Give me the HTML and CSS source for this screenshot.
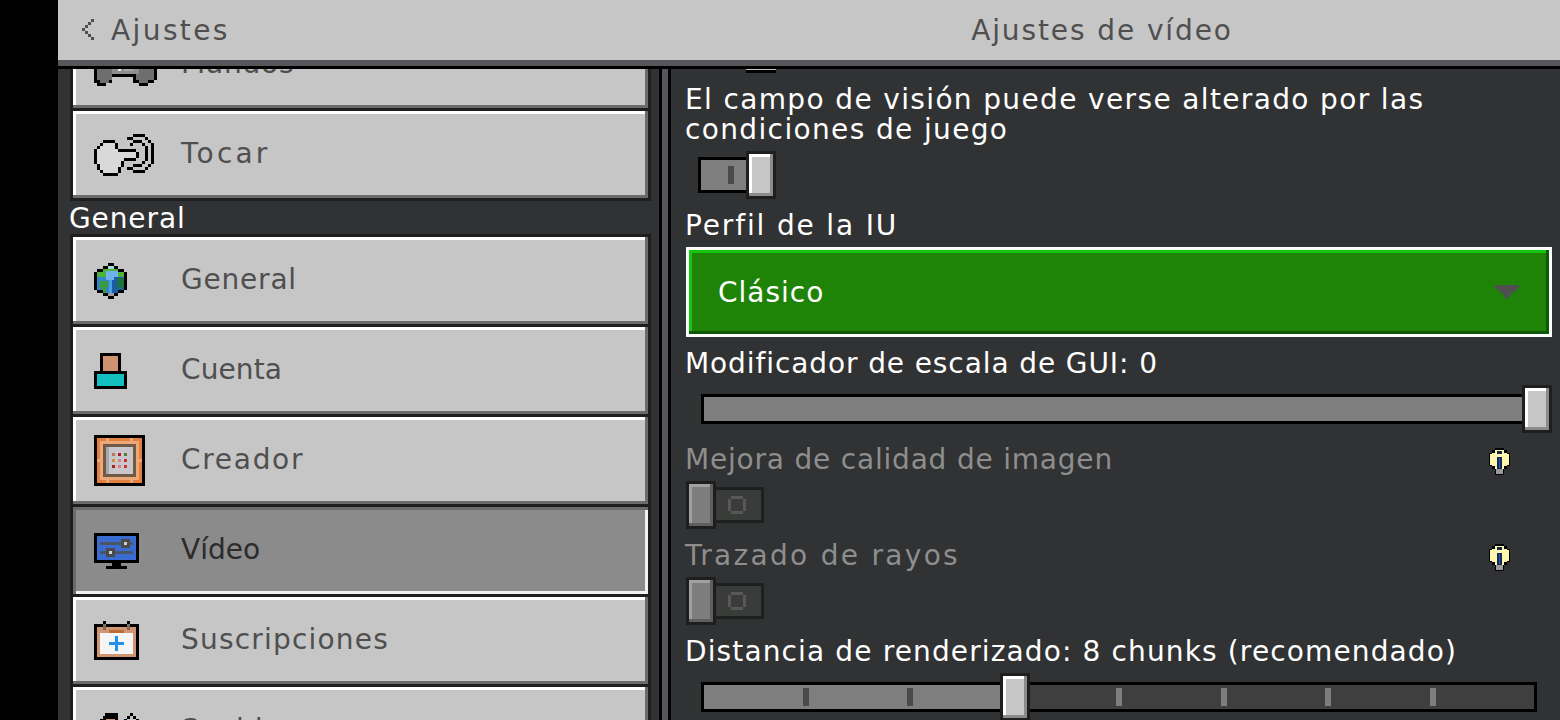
FILE: index.html
```html
<!DOCTYPE html>
<html lang="es">
<head>
  <meta charset="UTF-8" />
  <title>Ajustes de vídeo</title>
  <link rel="stylesheet" href="styles.css">
</head>
<body>
  <header class="topbar">
    <div class="back">
      <svg class="chevron" viewBox="0 0 4 7" width="12" height="21" shape-rendering="crispEdges"><path fill="#4f4f4f" d="M3 0h1v1H3zM2 1h1v1H2zM1 2h1v1H1zM0 3h1v1H0zM1 4h1v1H1zM2 5h1v1H2zM3 6h1v1H3z"/></svg>
      <span>Ajustes</span>
    </div>
    <div class="title">Ajustes de vídeo</div>
  </header>

  <div class="main">
    <aside class="sidebar">
      <div class="card first">
        <svg class="icon" viewBox="0 0 21 14" width="63" height="42" shape-rendering="crispEdges">
          <path fill="#000" d="M1 0h19v1h1v11h-1v1h-2v1h-3v-1h-2v-2H6v2H4v1H1v-1H0V1h1z"/>
          <path fill="#6e6e6e" d="M1 1h19v11h-2v1h-3v-1h-1V9H6v3H5v1H2v-1H1z"/>
          <path fill="#8e8e8e" d="M6 1h9v9H6z"/>
          <path fill="#f0f0f0" d="M8 8h1v1H8z"/>
          <path fill="#a8a8a8" d="M10 8h3v1h-3z"/>
        </svg>
        <span class="card-label ls-mandos">Mandos</span>
      </div>
      <div class="card">
        <svg class="icon" viewBox="0 0 20 14" width="60" height="42" shape-rendering="crispEdges">
          <path fill="#d9d9d9" d="M3 3h4v2h1v1h6v2h-3v1h-1v1H9v1H8v2H3v-1H2v-2H1V5h1V4h1z"/>
          <path fill="#000" d="M3 2h4v1H3zM2 3h1v1H2zM1 4h1v1H1zM0 5h1v5H0zM1 10h1v2H1zM2 12h1v1H2zM3 13h5v1H3zM8 11h1v2H8zM9 9h1v2H9zM7 3h1v2H7zM8 5h6v1H8zM14 6h1v2h-1zM10 8h4v1h-4z"/>
          <path fill="#000" d="M13 0h4v1h-4zM11 1h2v1h-2zM17 1h1v1h-1zM18 2h1v1h-1zM19 3h1v7h-1zM18 10h1v1h-1zM17 11h1v1h-1zM13 12h4v1h-4zM11 11h2v1h-2zM13 2h3v1h-3zM16 3h1v1h-1zM17 4h1v5h-1zM16 9h1v1h-1zM13 10h3v1h-3zM12 3h1v1h-1z"/>
        </svg>
        <span class="card-label ls-tocar">Tocar</span>
      </div>

      <div class="section">General</div>

      <div class="card">
        <svg class="icon" viewBox="0 0 22 24" width="33" height="36" shape-rendering="crispEdges">
          <path fill="#000" d="M9 0h4v2h3v2h4v2h2v12h-2v2h-4v2h-3v2H9v-2H6v-2H2v-2H0V6h2V4h4V2h3z"/>
          <path fill="#2f86c8" d="M2 6h9v16H9v-2H6v-2H2z"/>
          <path fill="#1d5aa8" d="M11 6h9v12h-4v2h-3v2h-2z"/>
          <path fill="#4cb33a" d="M6 4h3V2h4v2h3v2h4v3h-4V5H8v4H2V6h4z"/>
          <path fill="#6fb2ea" d="M8 5h8v4h-3v2H8z"/>
          <path fill="#4f9fe0" d="M10 11h2v9h-2z"/>
          <path fill="#3a9a3c" d="M4 12h5v4H8v4H6v-3H4z"/>
          <path fill="#1c7440" d="M15 10h5v6h-2v1h-3z"/>
          <path fill="#a8d8d8" d="M9 2h4v2H9z"/>
          <path fill="#9b9b9b" d="M9 20h4v2H9z"/>
        </svg>
        <span class="card-label">General</span>
      </div>
      <div class="card">
        <svg class="icon" viewBox="0 0 33 36" width="33" height="36" shape-rendering="crispEdges">
          <path fill="#000" d="M6 0h21v18h6v18H0V18h6z"/>
          <path fill="#cf9270" d="M9 3h15v15H9z"/>
          <path fill="#14bfbf" d="M3 21h27v12H3z"/>
        </svg>
        <span class="card-label ls-cuenta">Cuenta</span>
      </div>
      <div class="card">
        <svg class="icon" viewBox="0 0 51 51" width="51" height="51" shape-rendering="crispEdges">
          <path fill="#000" d="M0 0h51v51H0z"/>
          <path fill="#e2813f" d="M3 3h45v45H3z"/>
          <path fill="#eea878" d="M6 6h39v3H6zM6 42h39v3H6zM6 9h3v33H6zM42 9h3v33h-3zM12 3h3v3h-3zM36 3h3v3h-3zM12 45h3v3h-3zM36 45h3v3h-3zM3 24h3v3H3zM45 24h3v3h-3z"/>
          <path fill="#6f5a48" d="M9 9h33v33H9z"/>
          <path fill="#c9c7cc" d="M12 12h27v27H12z"/>
          <path fill="#a9a7ae" d="M12 12h3v27h-3z"/>
          <path fill="#c07060" d="M18 18h3v3h-3z"/>
          <path fill="#b02020" d="M24 18h3v3h-3zM18 30h3v3h-3z"/>
          <path fill="#5a7a30" d="M30 18h3v3h-3z"/>
          <path fill="#d09030" d="M18 24h3v3h-3z"/>
          <path fill="#d88080" d="M24 24h3v3h-3zM24 30h3v3h-3z"/>
          <path fill="#c83030" d="M30 24h3v3h-3zM30 30h3v3h-3z"/>
        </svg>
        <span class="card-label ls-creador">Creador</span>
      </div>
      <div class="card active">
        <svg class="icon" viewBox="0 0 45 36" width="45" height="36" shape-rendering="crispEdges">
          <path fill="#000" d="M0 0h45v30H27v3h6v3H12v-3h6v-3H0z"/>
          <path fill="#3a6bd0" d="M3 3h39v24H3z"/>
          <path fill="#4a5565" d="M6 9h33v3H6zM6 18h33v3H6z"/>
          <path fill="#4a4a4a" d="M27 6h9v9h-9zM12 15h9v9h-9z"/>
          <path fill="#d0d0d0" d="M30 9h3v3h-3zM15 18h3v3h-3z"/>
        </svg>
        <span class="card-label ls-video">Vídeo</span>
      </div>
      <div class="card">
        <svg class="icon" viewBox="0 0 45 39" width="45" height="39" shape-rendering="crispEdges">
          <path fill="#000" d="M0 3h45v36H0zM9 0h3v3H9zM33 0h3v3h-3z"/>
          <path fill="#d19570" d="M3 6h39v30H3z"/>
          <path fill="#7a6a5c" d="M9 3h3v6H9zM33 3h3v6h-3z"/>
          <path fill="#b86d35" d="M15 9h15v3H15z"/>
          <path fill="#f5f5f5" d="M6 12h33v21H6z"/>
          <path fill="#2291ec" d="M15 21h15v3H15zM21 15h3v15h-3z"/>
        </svg>
        <span class="card-label ls-subs">Suscripciones</span>
      </div>
      <div class="card">
        <svg class="icon" viewBox="0 0 45 36" width="45" height="36" shape-rendering="crispEdges">
          <path fill="#000" d="M11 0h13v36H6V6h3V3h2zM36 0h3v3h3v3h3v30H30V6h3V3h3z"/>
          <path fill="#cf9270" d="M12 6h9v30h-9z"/>
          <path fill="#c6c6c6" d="M36 3h3v3h3v30h-9V6h3z"/>
        </svg>
        <span class="card-label">Sonido</span>
      </div>
    </aside>

    <div class="scrollbar"></div>

    <section class="panel">
      <div class="thumb-tail"></div>

      <div class="setting">
        <p class="label ls-fov">El campo de visión puede verse alterado por las<br>condiciones de juego</p>
        <div class="toggle on">
          <div class="track"><i class="pip"></i></div>
          <div class="thumb"></div>
        </div>
      </div>

      <div class="setting">
        <p class="label ls-perfil">Perfil de la IU</p>
        <div class="dropdown">
          <span>Clásico</span>
          <svg viewBox="0 0 24 14" width="24" height="14" shape-rendering="crispEdges"><path fill="#4f4f52" d="M0 0h24v3h-2v3h-4v3h-3v3h-2v2h-2v-2H9V9H6V6H2V3H0z"/></svg>
        </div>
      </div>

      <div class="setting">
        <p class="label ls-mod">Modificador de escala de GUI: 0</p>
        <div class="slider">
          <div class="bar full"></div>
          <div class="thumb knob end"></div>
        </div>
      </div>

      <div class="setting">
        <div class="label-row">
          <p class="label off ls-mejora">Mejora de calidad de imagen</p>
          <svg class="bulb" viewBox="0 0 21 27" width="21" height="27" shape-rendering="crispEdges">
            <path fill="#000" d="M6 0h9v2h3v3h3v13h-3v3h-3v6H6v-6H3v-3H0V5h3V2h3z"/>
            <path fill="#fdf7b0" d="M6 2h9v3h3v1h2v11h-2v1h-3v3H6v-3H3v-1H1V6h2V5h3z"/>
            <path fill="#16284e" d="M8 3h5v3H8zM8 9h5v12H8z"/>
            <path fill="#2a5ac0" d="M10 10h1v10h-1z"/>
            <path fill="#9a9a9a" d="M7 21h7v5H7z"/>
          </svg>
        </div>
        <div class="toggle disabled">
          <div class="thumb"></div>
          <div class="track"><i class="ring"></i></div>
        </div>
      </div>

      <div class="setting">
        <div class="label-row">
          <p class="label off ls-trazado">Trazado de rayos</p>
          <svg class="bulb" viewBox="0 0 21 27" width="21" height="27" shape-rendering="crispEdges">
            <path fill="#000" d="M6 0h9v2h3v3h3v13h-3v3h-3v6H6v-6H3v-3H0V5h3V2h3z"/>
            <path fill="#fdf7b0" d="M6 2h9v3h3v1h2v11h-2v1h-3v3H6v-3H3v-1H1V6h2V5h3z"/>
            <path fill="#16284e" d="M8 3h5v3H8zM8 9h5v12H8z"/>
            <path fill="#2a5ac0" d="M10 10h1v10h-1z"/>
            <path fill="#9a9a9a" d="M7 21h7v5H7z"/>
          </svg>
        </div>
        <div class="toggle disabled">
          <div class="thumb"></div>
          <div class="track"><i class="ring"></i></div>
        </div>
      </div>

      <div class="setting">
        <p class="label ls-dist">Distancia de renderizado: 8 chunks (recomendado)</p>
        <div class="slider">
          <div class="bar partial">
            <i class="tick"></i><i class="tick"></i><i class="tick"></i>
            <i class="tick after"></i><i class="tick after"></i><i class="tick after"></i><i class="tick after"></i>
          </div>
          <div class="thumb knob" style="left: 37.5%"></div>
        </div>
      </div>
    </section>
  </div>
</body>
</html>
```

FILE: styles.css
```css
* {
  box-sizing: border-box;
}

html, body {
  height: 100%;
}

body {
  margin: 0;
  height: 720px;
  overflow: hidden;
  padding-left: 58px;
  display: flex;
  flex-direction: column;
  background-color: #000;
  font-family: 'DejaVu Sans', sans-serif;
  font-size: 28px;
  color: #fff;
}

.topbar {
  flex: none;
  height: 69px;
  display: flex;
  align-items: center;
  padding-bottom: 5px;
  background-color: #c6c6c6;
  border-bottom: 3px solid #000;
  box-shadow: inset 0 -6px 0 #58565a;
  color: #4f4f4f;
  position: relative;
  z-index: 2;
}

.back {
  width: 586px;
  display: flex;
  align-items: center;
  gap: 17px;
  padding-left: 24px;
  letter-spacing: 2.4px;
}

.chevron {
  margin-bottom: 2px;
}

.title {
  flex: 1;
  text-align: center;
  letter-spacing: 1.9px;
}

.main {
  flex: 1;
  min-height: 0;
  display: flex;
  overflow: hidden;
  background-color: #313233;
}

/* left column */
.sidebar {
  width: 601px;
  flex: none;
  padding: 0 8px 0 12px;
}

.card {
  height: 93px;
  margin-bottom: -3px;
  display: flex;
  align-items: center;
  padding-left: 21px;
  background-color: #c6c6c6;
  border: 3px solid #1e1e1f;
  box-shadow: inset -3px -3px 0 #6b6b6b, inset 3px 3px 0 #fff;
  color: #4f4f4f;
}

.card.first {
  margin-top: -51px;
}

.icon {
  flex: none;
}

.card-label {
  position: absolute;
  margin-left: 87px;
  padding-bottom: 3px;
  letter-spacing: 0.8px;
}

.card.active {
  background-color: #8b8b8b;
  box-shadow: inset 3px 3px 0 #6b6b6b, inset -3px -3px 0 #f0f0f0;
  color: #2b2b2b;
}

/* letter-spacing per string, the game font has other widths */
.ls-tocar { letter-spacing: 3.2px; }
.ls-mandos { letter-spacing: 0.8px; }
.ls-cuenta { letter-spacing: 0.1px; }
.ls-creador { letter-spacing: 1.7px; }
.ls-video { letter-spacing: 0; }
.ls-subs { letter-spacing: 1.2px; }

.section {
  height: 36px;
  margin-left: -1px;
  line-height: 42px;
  letter-spacing: 0.9px;
}

.scrollbar {
  width: 12px;
  flex: none;
  background-color: #58565a;
  border-left: 3px solid #000;
  border-right: 3px solid #000;
}

/* right column */
.panel {
  flex: 1;
  min-width: 0;
  padding: 0 8px 0 15px;
}

.thumb-tail {
  width: 30px;
  height: 4px;
  margin: 0 0 11px 60px;
  background-color: #000;
  border-top: 1px solid #c6c6c6;
}

.setting {
  display: flex;
  flex-direction: column;
  gap: 7px;
  margin-bottom: 11px;
}

.label {
  margin: 0 0 -1px -1px;
  padding-top: 1px;
  line-height: 30px;
  letter-spacing: 1px;
  white-space: nowrap;
}

.label.off {
  color: #8e8e8e;
}

.ls-fov { letter-spacing: 1.36px; }
.ls-perfil { letter-spacing: 1.85px; }
.ls-mod { letter-spacing: 0.9px; }
.ls-mejora { letter-spacing: 0.8px; }
.ls-trazado { letter-spacing: 2.3px; }
.ls-dist { letter-spacing: 1.13px; }

.label-row {
  display: flex;
  justify-content: space-between;
  align-items: center;
  height: 30px;
  padding-right: 42px;
}

.bulb {
  margin-top: 4px;
}

.toggle {
  display: flex;
  align-items: center;
  width: 90px;
  height: 48px;
}

.toggle.on {
  padding-left: 12px;
}

.track {
  width: 48px;
  height: 36px;
  display: flex;
  align-items: center;
  justify-content: center;
}

.toggle.on .track {
  background-color: #7e7e7e;
  border: 3px solid #000;
  border-right: none;
  padding-left: 15px;
}

.pip {
  width: 6px;
  height: 18px;
  background-color: #4a4a4a;
}

.toggle.disabled .track {
  background-color: #3a3c3a;
  border: 3px solid #1e1f1f;
  border-left: none;
  padding-right: 3px;
}

.ring {
  width: 18px;
  height: 18px;
  border: 3px solid #58585a;
  clip-path: polygon(3px 0, 15px 0, 15px 3px, 18px 3px, 18px 15px, 15px 15px, 15px 18px, 3px 18px, 3px 15px, 0 15px, 0 3px, 3px 3px);
}

.thumb {
  width: 30px;
  height: 48px;
  flex: none;
  background-color: #c6c6c6;
  border: 3px solid #1e1e1f;
  box-shadow: inset -3px -3px 0 #8b8b8b, inset 3px 3px 0 #fff;
}

.toggle.disabled .thumb {
  background-color: #7c7e7c;
  box-shadow: inset -3px -3px 0 #5f5f5f, inset 3px 3px 0 #a0a0a0;
}

.dropdown {
  height: 90px;
  display: flex;
  align-items: center;
  justify-content: space-between;
  padding: 0 30px 0 29px;
  background-color: #1e8306;
  border: 3px solid #fff;
  box-shadow: inset -3px -3px 0 #0f5a08, inset 3px 3px 0 #14c60e;
  letter-spacing: 1px;
}

.slider {
  position: relative;
  margin: 0 15px;
  height: 48px;
  display: flex;
  align-items: center;
}

.bar {
  flex: 1;
  height: 30px;
  border: 3px solid #000;
  display: flex;
  align-items: center;
  justify-content: space-evenly;
}

.bar.full {
  background-color: #7e7e7e;
}

.bar.partial {
  background: linear-gradient(90deg, #7e7e7e 37.5%, #3f3f3f 37.5%);
}

.tick {
  width: 6px;
  height: 18px;
  background-color: #4a4a4a;
}

.tick.after {
  background-color: #7e7e7e;
}

.knob {
  position: absolute;
  top: 0;
  margin-left: -15px;
}

.knob.end {
  left: 100%;
}
```
